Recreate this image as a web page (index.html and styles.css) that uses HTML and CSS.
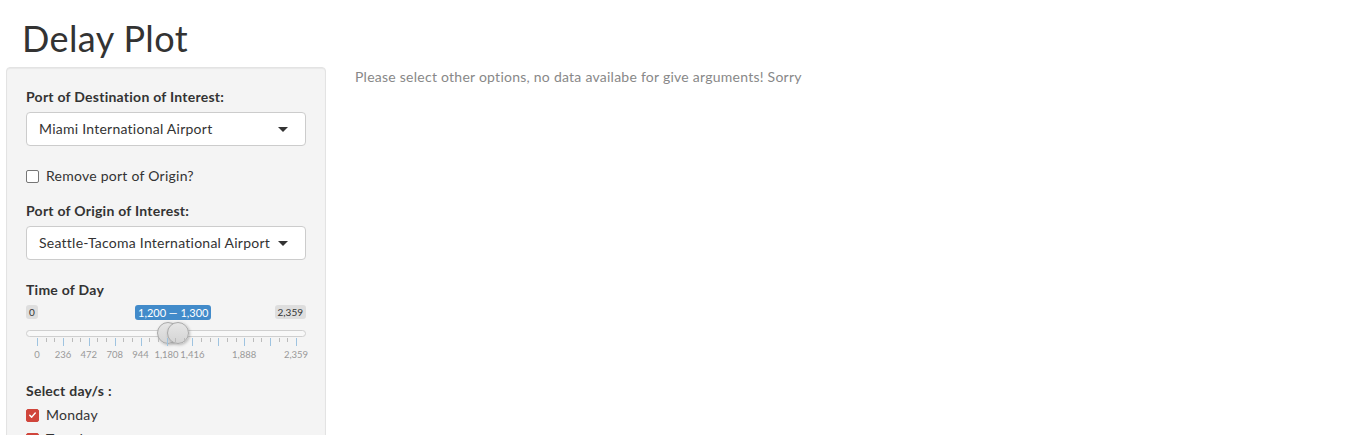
FILE: index.html
```html
<!DOCTYPE html>
<html>
<head>
<meta charset="utf-8">
<link rel="stylesheet" href="styles.css">
</head>
<body>
<div class="page">
  <h1 class="title">Delay Plot</h1>
  <div class="row">
    <div class="sidebar">
      <div class="well">
        <div class="group">
          <label class="ctl-label">Port of Destination of Interest:</label>
          <div class="select"><span class="sel-text">Miami International Airport</span><span class="caret"></span></div>
        </div>
        <div class="check-row">
          <span class="cb"></span><span class="cb-label">Remove port of Origin?</span>
        </div>
        <div class="group">
          <label class="ctl-label">Port of Origin of Interest:</label>
          <div class="select"><span class="sel-text">Seattle-Tacoma International Airport</span><span class="caret"></span></div>
        </div>
        <div class="group slider-group">
          <label class="ctl-label">Time of Day</label>
          <div class="slider">
            <div class="badges">
              <span class="badge">0</span>
              <span class="badge">2,359</span>
            </div>
            <span class="badge badge-val">1,200 — 1,300</span>
            <div class="track"></div>
            <span class="handle" style="left:131px"></span>
            <span class="handle" style="left:141px"></span>
            <div class="grid">
              <span class="tick major" style="left:0%"></span>
              <span class="tick" style="left:3.33%"></span>
              <span class="tick" style="left:6.67%"></span>
              <span class="tick major" style="left:10%"></span>
              <span class="tick" style="left:13.33%"></span>
              <span class="tick" style="left:16.67%"></span>
              <span class="tick major" style="left:20%"></span>
              <span class="tick" style="left:23.33%"></span>
              <span class="tick" style="left:26.67%"></span>
              <span class="tick major" style="left:30%"></span>
              <span class="tick" style="left:33.33%"></span>
              <span class="tick" style="left:36.67%"></span>
              <span class="tick major" style="left:40%"></span>
              <span class="tick" style="left:43.33%"></span>
              <span class="tick" style="left:46.67%"></span>
              <span class="tick major" style="left:50%"></span>
              <span class="tick" style="left:53.33%"></span>
              <span class="tick" style="left:56.67%"></span>
              <span class="tick major" style="left:60%"></span>
              <span class="tick" style="left:63.33%"></span>
              <span class="tick" style="left:66.67%"></span>
              <span class="tick major" style="left:70%"></span>
              <span class="tick" style="left:73.33%"></span>
              <span class="tick" style="left:76.67%"></span>
              <span class="tick major" style="left:80%"></span>
              <span class="tick" style="left:83.33%"></span>
              <span class="tick" style="left:86.67%"></span>
              <span class="tick major" style="left:90%"></span>
              <span class="tick" style="left:93.33%"></span>
              <span class="tick" style="left:96.67%"></span>
              <span class="tick major" style="left:100%"></span>
              <span class="tlabel" style="left:0%">0</span>
              <span class="tlabel" style="left:10%">236</span>
              <span class="tlabel" style="left:20%">472</span>
              <span class="tlabel" style="left:30%">708</span>
              <span class="tlabel" style="left:40%">944</span>
              <span class="tlabel" style="left:50%">1,180</span>
              <span class="tlabel" style="left:60%">1,416</span>
              <span class="tlabel" style="left:80%">1,888</span>
              <span class="tlabel" style="left:100%">2,359</span>
            </div>
          </div>
        </div>
        <div class="group days">
          <label class="ctl-label">Select day/s :</label>
          <div class="check-row day"><span class="cb checked"><svg viewBox="0 0 12 12" width="12" height="12"><path d="M3 6.2 L5.1 8.3 L9 3.8" fill="none" stroke="#fff" stroke-width="1.6" stroke-linecap="round" stroke-linejoin="round"/></svg></span><span class="cb-label">Monday</span></div>
          <div class="check-row day"><span class="cb checked"><svg viewBox="0 0 12 12" width="12" height="12"><path d="M3 6.2 L5.1 8.3 L9 3.8" fill="none" stroke="#fff" stroke-width="1.6" stroke-linecap="round" stroke-linejoin="round"/></svg></span><span class="cb-label">Tuesday</span></div>
        </div>
      </div>
    </div>
    <div class="main">
      <div class="message">Please select other options, no data availabe for give arguments! Sorry</div>
    </div>
  </div>
</div>
</body>
</html>
```
FILE: styles.css
```css
html, body {
  margin: 0;
  padding: 0;
  background: #fff;
  overflow: hidden;
}
body {
  font-family: "Lato", "Liberation Sans", sans-serif;
  font-size: 14px;
  line-height: 20px;
  letter-spacing: 0.25px;
  color: #333;
}
.page {
  padding: 0 0 0 6px;
}
.title {
  margin: 0 0 9px 16px;
  padding-top: 18px;
  font-size: 36px;
  line-height: 40px;
  font-weight: 400;
  letter-spacing: 0.4px;
  color: #333;
}
.row {
  display: flex;
  align-items: flex-start;
}
.sidebar {
  width: 320px;
  flex: none;
}
.well {
  background: #f4f4f4;
  border: 1px solid #e3e3e3;
  border-radius: 4px;
  box-shadow: inset 0 1px 1px rgba(0,0,0,0.05);
  padding: 19px 19px 40px 19px;
  height: 400px;
  box-sizing: border-box;
}
.main {
  padding: 0 15px 0 29px;
}
.message {
  color: #888;
  margin-top: 0;
  line-height: 20px;
}
.ctl-label {
  display: block;
  font-weight: 700;
  margin-bottom: 5px;
  line-height: 20px;
}
.select {
  position: relative;
  height: 34px;
  box-sizing: border-box;
  border: 1px solid #ccc;
  border-radius: 4px;
  background: #fff;
  padding: 6px 12px;
  line-height: 20px;
  white-space: nowrap;
  overflow: hidden;
}
.sel-text {
  color: #333;
}
.caret {
  position: absolute;
  right: 17px;
  top: 14px;
  width: 0;
  height: 0;
  border-left: 5px solid transparent;
  border-right: 5px solid transparent;
  border-top: 5px solid #333;
}
.check-row {
  display: flex;
  align-items: center;
  gap: 7px;
  margin: 20px 0 15px;
  height: 20px;
}
.cb {
  width: 11px;
  height: 11px;
  border: 1px solid #767676;
  border-radius: 2px;
  background: #fff;
  flex: none;
  display: flex;
  align-items: center;
  justify-content: center;
}
.cb.checked {
  background: #d0453b;
  border-color: #d0453b;
}
.cb.checked svg {
  display: block;
}
.slider-group {
  margin-top: 20px;
}
.slider {
  position: relative;
  height: 60px;
  letter-spacing: 0;
}
.badges {
  display: flex;
  justify-content: space-between;
  height: 15px;
}
.badge {
  display: inline-block;
  background: #dedede;
  color: #333;
  font-size: 10px;
  line-height: 14px;
  height: 14px;
  padding: 0 3px;
  border-radius: 3px;
}
.badge-val {
  position: absolute;
  left: 109px;
  top: 0;
  background: #428bca;
  color: #fff;
  font-size: 11px;
  line-height: 15px;
  height: 15px;
  padding: 0 3px;
}
.track {
  margin-top: 10px;
  height: 7px;
  background: #f8f8f8;
  border: 1px solid #cfcfcf;
  border-radius: 5px;
  box-sizing: border-box;
}
.handle {
  position: absolute;
  top: 17px;
  width: 22px;
  height: 22px;
  box-sizing: border-box;
  border-radius: 50%;
  background: linear-gradient(#e6e6e6, #d4d4d4);
  border: 1px solid #a8a8a8;
  box-shadow: 1px 1px 3px rgba(0,0,0,0.25);
}
.grid {
  position: relative;
  margin: 1px 10px 0 11px;
  height: 24px;
}
.tick {
  position: absolute;
  top: 0;
  width: 1px;
  height: 4px;
  background: #bbb;
}
.tick.major {
  height: 8px;
  background: #9ec3e0;
}
.tlabel {
  position: absolute;
  top: 12px;
  transform: translateX(-50%);
  font-size: 9.5px;
  line-height: 10px;
  color: #999;
  white-space: nowrap;
}
.days {
  margin-top: 16px;
}
.days .ctl-label {
  margin-bottom: 4px;
}
.check-row.day {
  margin: 0 0 4px;
}
```
